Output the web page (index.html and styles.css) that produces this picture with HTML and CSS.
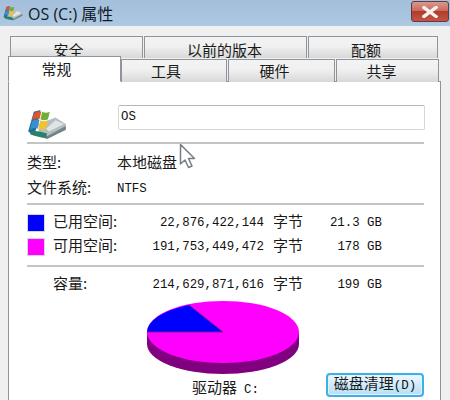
FILE: index.html
```html
<!DOCTYPE html>
<html lang="zh">
<head>
<meta charset="utf-8">
<title>OS (C:) 属性</title>
<link rel="stylesheet" href="styles.css">
</head>
<body>
<svg class="defs" width="0" height="0">
  <symbol id="drive" viewBox="0 0 42 34">
    <path d="M12 17 L30 10 L41 17 L41 23 L21 33 L12 29 Z" fill="#b4bec0"/>
    <path d="M12 26 L21 30 L41 19 L41 23 L21 33 L12 29 Z" fill="#6f8486"/>
    <path d="M20 22 L30 13 L39 17 L23 25 Z" fill="#dfe5e5"/>
    <path d="M1 25 L7 4 L14 2 L12 12 L9 24 L5 28 Z" fill="#1f6f96"/>
    <path d="M7 6 Q11 2 15 4 L13 12 Q9 10 5 13 Z" fill="#e0552c"/>
    <path d="M16 4 Q20 6 24 4 L22 12 Q18 14 14 12 Z" fill="#6fae3a"/>
    <path d="M5 14 Q9 11 13 13 L11 22 Q7 20 3 23 Z" fill="#3a8fd0"/>
    <path d="M14 13 Q18 15 22 13 L20 22 Q16 24 12 22 Z" fill="#f2c12e"/>
    <path d="M4 25 Q10 23 21 27 L20 32 Q10 31 3 28 Z" fill="#2c7f6a"/>
  </symbol>
</svg>
<div class="window">
  <header class="titlebar">
    <div class="title-left">
      <svg class="title-icon"><use href="#drive"/></svg>
      <span class="title-text">OS (C:) 属性</span>
    </div>
    <button class="close" aria-label="关闭">
      <svg width="16" height="12" viewBox="0 0 16 12"><path d="M2 1.5 L14 10.5 M14 1.5 L2 10.5" stroke="#f4f1ee" stroke-width="3.4" stroke-linecap="square" fill="none"/></svg>
    </button>
  </header>
  <div class="body">
    <div class="tabs tabs-back">
      <div class="tab t-a">安全</div>
      <div class="tab t-b">以前的版本</div>
      <div class="tab t-c">配额</div>
    </div>
    <div class="tabs tabs-front">
      <div class="tab tab-active">常规</div>
      <div class="tab t-d">工具</div>
      <div class="tab t-e">硬件</div>
      <div class="tab t-f">共享</div>
    </div>
    <main class="panel">
      <section class="name-row">
        <svg class="drive-icon"><use href="#drive"/></svg>
        <div class="edit">OS</div>
      </section>
      <section class="info">
        <div class="info-row"><span class="info-label cjk">类型:</span><span class="cjk">本地磁盘</span></div>
        <div class="info-row"><span class="info-label cjk">文件系统:</span><span class="mono">NTFS</span></div>
      </section>
      <section class="usage">
        <div class="usage-row">
          <span class="swatch swatch-used"></span><span class="u-label cjk">已用空间:</span>
          <span class="u-bytes mono">22,876,422,144</span><span class="u-unit cjk">字节</span><span class="u-size mono">21.3 GB</span>
        </div>
        <div class="usage-row">
          <span class="swatch swatch-free"></span><span class="u-label cjk">可用空间:</span>
          <span class="u-bytes mono">191,753,449,472</span><span class="u-unit cjk">字节</span><span class="u-size mono">178 GB</span>
        </div>
      </section>
      <section class="capacity">
        <div class="usage-row">
          <span class="swatch swatch-none"></span><span class="u-label cjk">容量:</span>
          <span class="u-bytes mono">214,629,871,616</span><span class="u-unit cjk">字节</span><span class="u-size mono">199 GB</span>
        </div>
      </section>
      <section class="chart">
        <svg class="pie" width="156" height="76" viewBox="0 0 156 76">
          <path d="M1 32 V44 A76 30 0 0 0 153 44 V32 Z" fill="#800080"/>
          <ellipse cx="77" cy="32" rx="76" ry="31" fill="#ff00ff"/>
          <path d="M77 32 H1 A76 31 0 0 1 43 5 Z" fill="#0000ff"/>
          <path d="M1 32 H77 L43 5" fill="none" stroke="#7a1a9a" stroke-width="1"/>
        </svg>
        <div class="drive-label">驱动器<span class="mono drive-letter">C:</span></div>
        <button class="cleanup">磁盘清理<span class="mono">(D)</span></button>
      </section>
    </main>
  </div>
  <svg class="cursor" width="18" height="26" viewBox="0 0 18 26">
    <path d="M1.5 1.5 V21 L6 17 L9.500 24.500 L13 23 L9.500 15.500 L15.500 15.500 Z" fill="#fff" stroke="#777d84" stroke-width="1.500" stroke-linejoin="round"/>
  </svg>
</div>
</body>
</html>
```
FILE: styles.css
```css
* { box-sizing: border-box; }
html, body { margin: 0; padding: 0; }
body {
  width: 450px;
  height: 400px;
  overflow: hidden;
  background: #f0f0f0;
  font-family: "Noto Sans CJK SC", "Liberation Sans", sans-serif;
  font-size: 15px;
  color: #1a1a1a;
}
.defs { position: absolute; }
.window { position: relative; width: 450px; height: 400px; overflow: hidden; }
.mono { font-family: "Liberation Mono", "Noto Sans CJK SC", monospace; font-size: 12.4px; color: #111; }
.cjk { line-height: 16px; padding-bottom: 4px; }

.titlebar {
  height: 26px;
  display: flex;
  align-items: flex-start;
  justify-content: space-between;
  background: linear-gradient(#a3bfdb, #aec8e2);
  padding-right: 1px;
}
.title-left { display: flex; align-items: center; height: 25px; padding-left: 3px; gap: 5px; }
.title-icon { width: 20px; height: 16px; }
.title-text { font-family: "Open Sans", "Noto Sans CJK SC", sans-serif; font-size: 16px; color: #111a26; }
.close {
  width: 38px;
  height: 21px;
  margin-top: 1px;
  padding: 0;
  border: 1px solid #5e3a44;
  border-radius: 3px;
  background: linear-gradient(#d99a8e 0, #cb6a5d 45%, #b23b2c 50%, #c45443 100%);
  display: flex;
  align-items: center;
  justify-content: center;
}

.body { height: 374px; padding: 10px 9px 0 8px; }
.tabs { display: flex; }
.tab {
  display: flex;
  align-items: center;
  justify-content: center;
  border: 1px solid #8d949b;
  border-bottom: 0;
  background: linear-gradient(#f3f3f3, #f0f0f0 45%, #d8d8d8);
  line-height: 1;
}
.tabs-back { height: 22px; padding-left: 2px; gap: 1px; }
.tabs-back .tab { padding-top: 4px; }
.t-a { width: 133px; padding-right: 16px; }
.t-b { width: 163px; padding-right: 2px; }
.t-c { width: 130px; padding-right: 14px; }
.tabs-front { height: 24px; position: relative; z-index: 1; align-items: flex-end; }
.tab-active {
  width: 113px;
  height: 26px;
  margin-top: -2px;
  background: #fff;
  border-color: #8d949b;
  border-bottom: 1px solid #fff;
  padding-bottom: 1px;
  padding-right: 16px;
}
.t-d, .t-e, .t-f { height: 23px; padding-bottom: 1px; }
.t-d { width: 106px; padding-right: 16px; }
.t-e { width: 107px; margin-left: 1px; padding-right: 14px; }
.t-f { width: 103px; margin-left: 1px; padding-right: 12px; }

.panel {
  height: 320px;
  width: 433px;
  margin-top: -1px;
  background: #fff;
  border: 1px solid #8d949b;
  border-bottom: 0;
  padding: 0 16px 0 18px;
}
.name-row {
  height: 62px;
  display: flex;
  border-bottom: 2px solid #c4c4c4;
  padding-top: 23px;
}
.drive-icon { width: 40px; height: 32px; margin-right: 51px; margin-top: 3px; }
.edit {
  width: 307px;
  height: 25px;
  margin-right: -2px;
  border: 1px solid #d2d7dd;
  border-top-color: #b3b8bf;
  border-radius: 2px;
  padding: 3px 2px;
  font-family: "Liberation Mono", monospace;
  font-size: 12.4px;
  color: #111;
  line-height: 16px;
}
.info {
  height: 61px;
  border-bottom: 2px solid #c4c4c4;
  padding-top: 7px;
}
.info-row { display: flex; height: 25px; align-items: center; }
.info-label { width: 90px; }
.usage {
  height: 62px;
  border-bottom: 2px solid #c4c4c4;
  padding-top: 6px;
}
.usage-row { display: flex; align-items: center; height: 24px; }
.swatch { width: 18px; height: 18px; margin-right: 8px; border: 1px solid #d8d8e0; flex: none; }
.swatch-used { background: #0000ff; }
.swatch-free { background: #ff00ff; }
.swatch-none { border: 0; }
.u-label { width: 80px; }
.u-bytes { width: 131px; text-align: right; white-space: nowrap; }
.u-unit { margin-left: 9px; width: 30px; }
.u-size { width: 79px; text-align: right; white-space: nowrap; }
.capacity { height: 30px; padding-top: 6px; }
.chart { position: relative; height: 100px; }
.pie { position: absolute; left: 119px; top: 3px; }
.drive-label { position: absolute; left: 165px; top: 80px; white-space: nowrap; line-height: 20px; }
.drive-letter { margin-left: 7px; }
.cleanup {
  position: absolute;
  left: 299px;
  top: 76px;
  width: 98px;
  height: 24px;
  padding: 0 0 2px;
  border: 2px solid #3fb0e4;
  border-radius: 4px;
  background: linear-gradient(#eef8fd, #cfeafa 50%, #b6dff5);
  box-shadow: inset 0 0 0 1px #dff3fc;
  color: #1a1a1a;
  font-family: "Noto Sans CJK SC", sans-serif;
  font-size: 15px;
  line-height: 1;
}
.cursor { position: absolute; left: 179px; top: 143px; }
```
